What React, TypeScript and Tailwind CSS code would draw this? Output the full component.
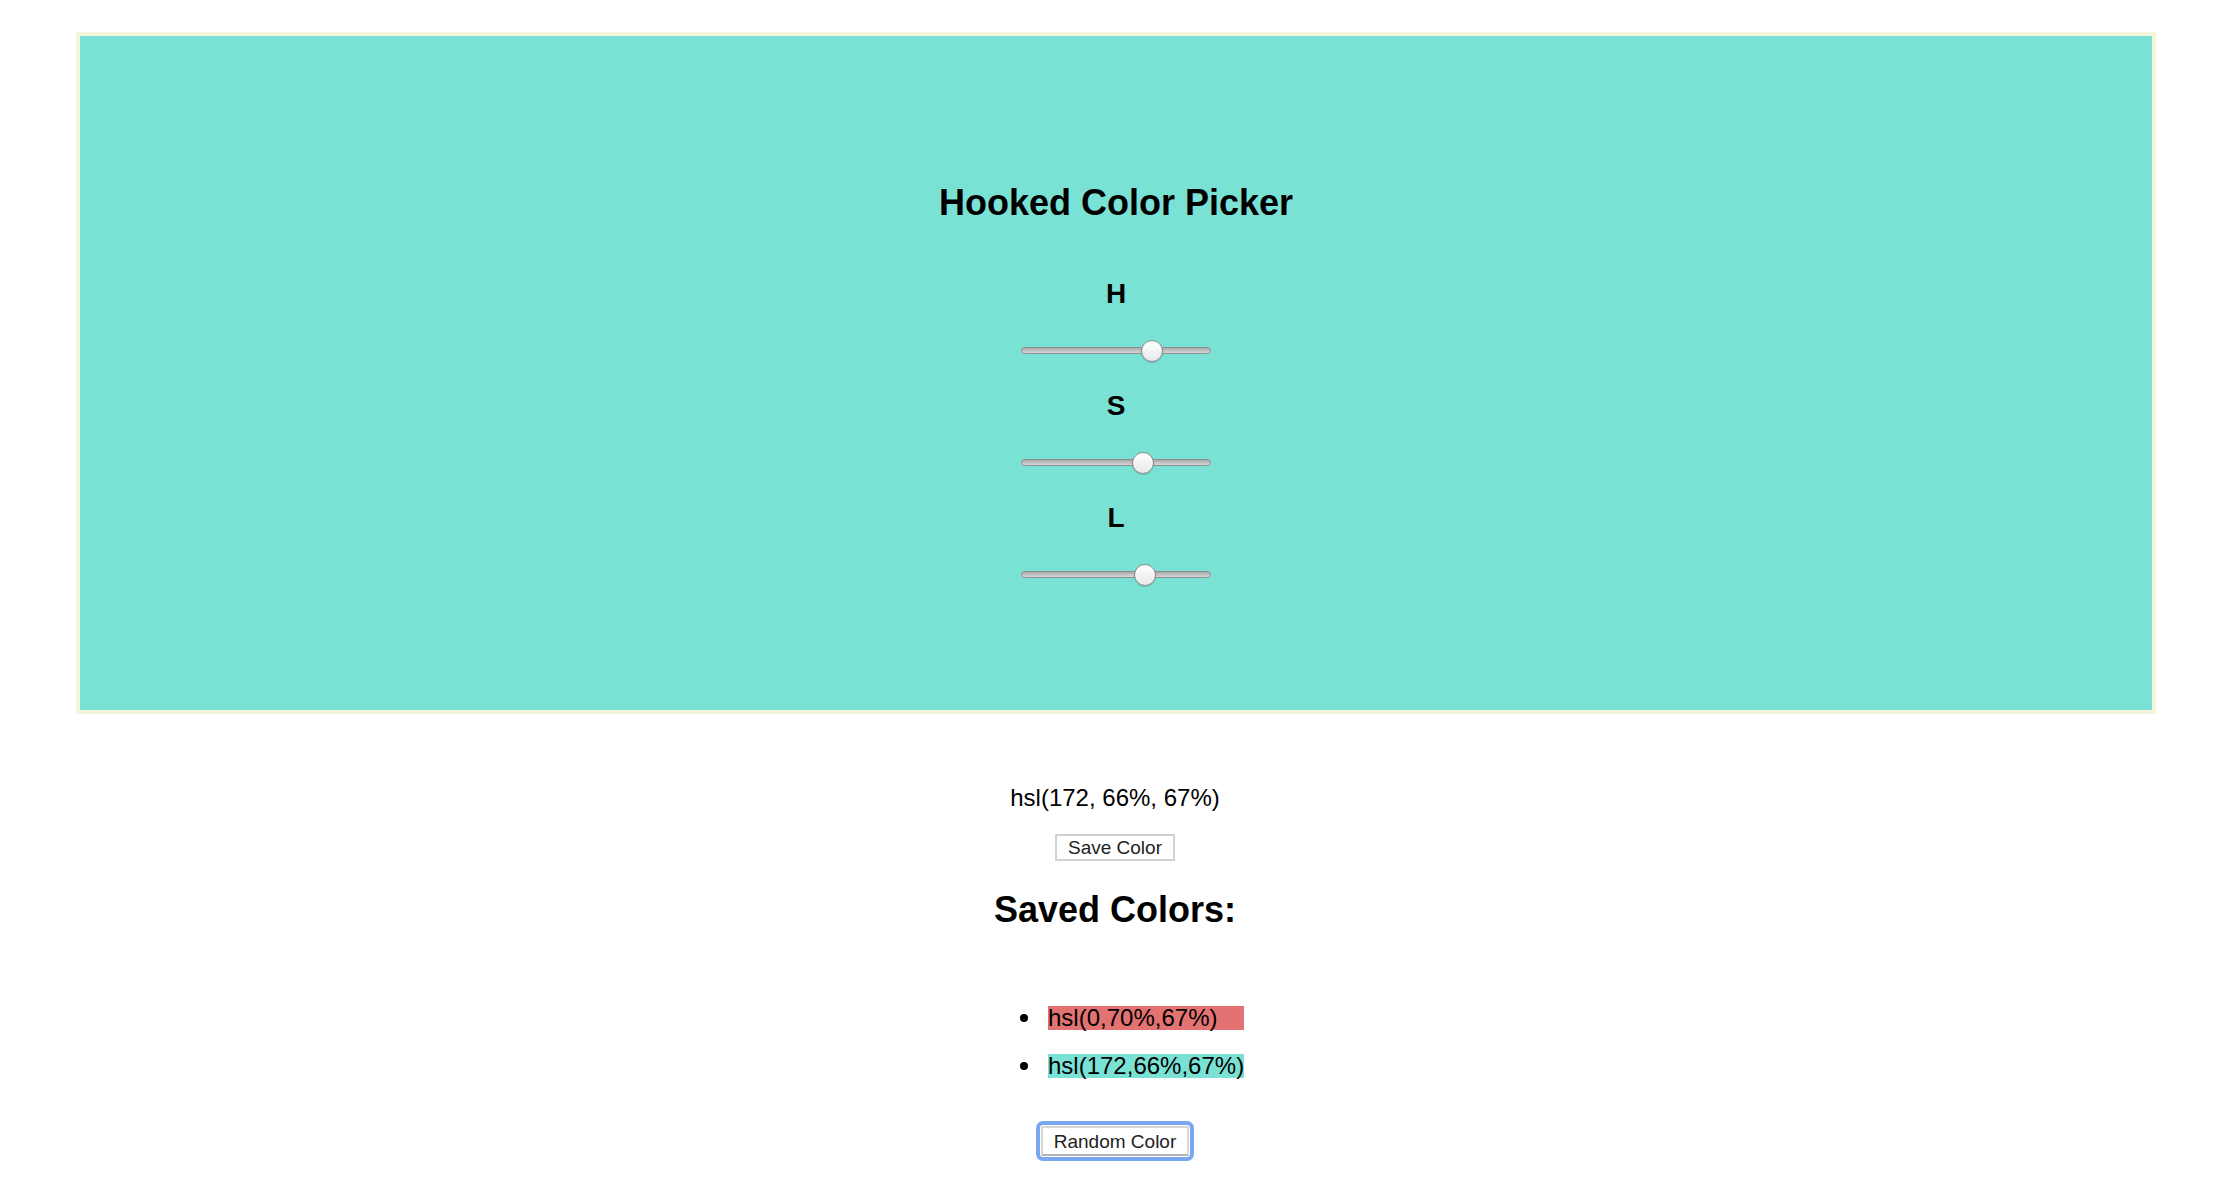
import { useState } from "react";

type Hsl = { h: number; s: number; l: number };

type SliderProps = {
    label: string;
    value: number;
    max: number;
};

// rendered swatch colours as they appear on screen
const savedColors: { hsl: Hsl; swatch: string }[] = [
    { hsl: { h: 0, s: 70, l: 67 }, swatch: "#e37272" },
    { hsl: { h: 172, s: 66, l: 67 }, swatch: "#7ae2d4" },
];

function ColorSlider({ label, value, max }: SliderProps) {
    // thumb is 22px wide, track 190px
    const left = (value / max) * (190 - 22);

    return (
        <div className="flex flex-col items-center">
            <div className="h-[28px] text-[28px] leading-[28px] font-bold">{label}</div>
            <div className="relative mt-[32px] h-[22px] w-[190px]">
                <div className="absolute left-0 right-0 top-[7px] h-[7px] rounded-full border border-[#8f8f8f] bg-gradient-to-b from-[#a9a9a9] to-[#d6d6d6]" />
                <div
                    className="absolute top-0 h-[22px] w-[22px] rounded-full border border-[#8a8a8a] bg-gradient-to-b from-white to-[#e9e9e9] shadow-[0_1px_1px_rgba(0,0,0,0.15)]"
                    style={{ left }}
                />
            </div>
        </div>
    );
}

export default function App() {
    const [color] = useState<Hsl>({ h: 172, s: 66, l: 67 });

    return (
        <div className="min-h-[1192px] bg-white font-['Liberation_Sans',Arial,sans-serif] text-black">
            <div className="ml-[76px] mt-[32px] flex h-[682px] w-[2080px] flex-col items-center border-4 border-[#f5f5dc] bg-[#7ae2d4] pt-[146px]">
                <h1 className="h-[42px] text-[36px] leading-[42px] font-bold">Hooked Color Picker</h1>
                <div className="mt-[56px] flex flex-col gap-[30px]">
                    <ColorSlider label="H" value={color.h} max={240} />
                    <ColorSlider label="S" value={color.s} max={100} />
                    <ColorSlider label="L" value={color.l} max={100} />
                </div>
            </div>

            <div className="flex flex-col items-center">
                <p className="mt-[70px] h-[28px] text-[24px] leading-[28px]">
                    hsl({color.h}, {color.s}%, {color.l}%)
                </p>
                <button className="mt-[22px] flex h-[27px] w-[120px] items-center justify-center border-2 border-[#d2d2d2] bg-white text-[19px] leading-none text-[#222]">
                    Save Color
                </button>
                <h2 className="mt-[28px] h-[42px] text-[36px] leading-[42px] font-bold">Saved Colors:</h2>
                <ul className="mt-[75px] flex w-[258px] flex-col gap-6 pl-[34px]">
                    {savedColors.map(({ hsl, swatch }) => (
                        <li key={`${hsl.h}-${hsl.s}-${hsl.l}`} className="flex items-center gap-[20px]">
                            <span className="h-[8px] w-[8px] rounded-full bg-black" />
                            <span
                                className="h-[24px] w-[196px] text-[24px] leading-[24px]"
                                style={{ backgroundColor: swatch }}
                            >
                                hsl({hsl.h},{hsl.s}%,{hsl.l}%)
                            </span>
                        </li>
                    ))}
                </ul>
                <button className="mt-[48px] flex h-[30px] w-[148px] items-center justify-center rounded-[2px] border-2 border-[#d6d6d6] border-b-[#b3b3b3] bg-white text-[19px] leading-none text-[#222] outline-4 outline-offset-1 outline-[#78a6f2]">
                    Random Color
                </button>
            </div>
        </div>
    );
}
